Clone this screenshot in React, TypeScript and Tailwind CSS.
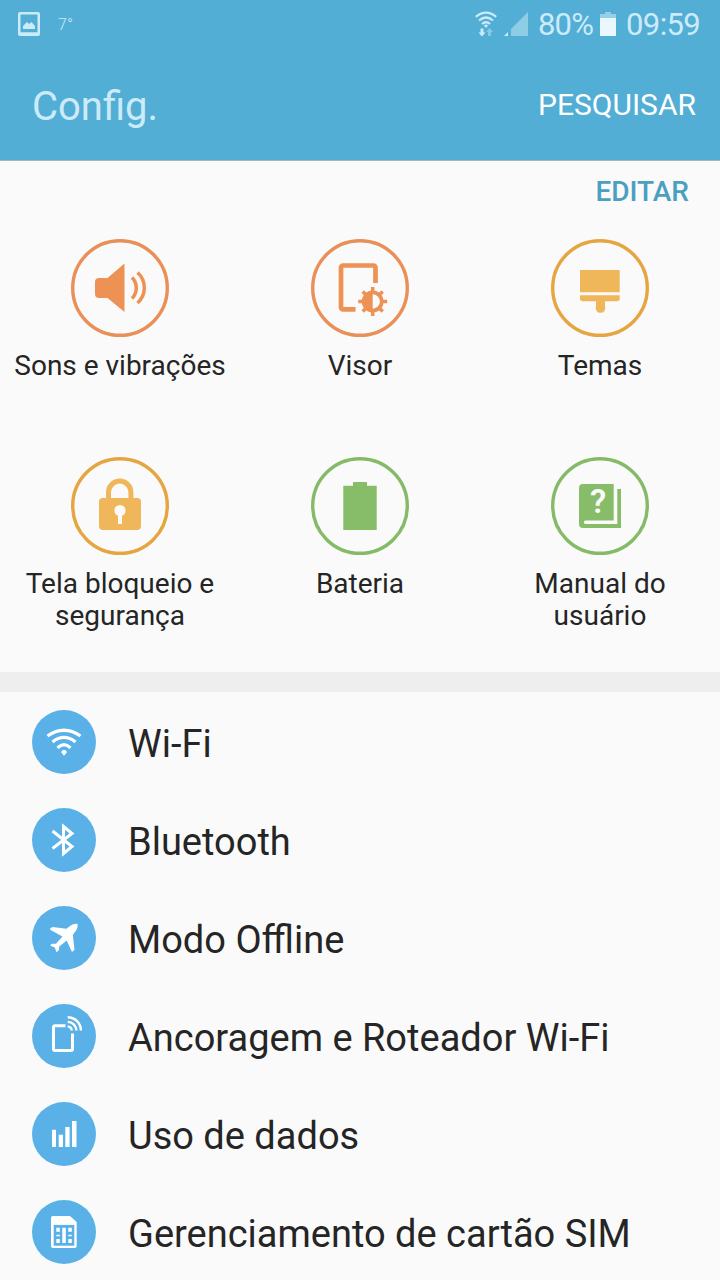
import type { ReactNode } from 'react';

const shortcuts: { label: string; color: string; icon: ReactNode }[] = [
  {
    label: 'Sons e vibrações',
    color: 'text-[#ed9155]',
    icon: (
      <>
        <path d="M39 48H47.5L64.5 33.5V82L47.5 68H39a4 4 0 0 1-4-4V52a4 4 0 0 1 4-4Z" fill="currentColor" />
        <path d="M72 47.5A15 15 0 0 1 72 68.5M77.5 42.5A20.500 20.500 0 0 1 77.5 73" fill="none" stroke="currentColor" strokeWidth="3.5" />
      </>
    ),
  },
  {
    label: 'Visor',
    color: 'text-[#ed9155]',
    icon: (
      <>
        <path d="M75.5 53V37.5a2 2 0 0 0-2-2H43a2 2 0 0 0-2 2V77.3a2 2 0 0 0 2 2H55.5" fill="none" stroke="currentColor" strokeWidth="4.7" />
        <circle cx="72.7" cy="71.5" r="10.9" fill="currentColor" />
        <path d="M72.7 57V86M58.2 71.5H87.2M62.7 61.5L82.7 81.5M82.7 61.5L62.7 81.5" stroke="currentColor" strokeWidth="3.5" />
        <path d="M72.7 64.3a7.2 7.2 0 0 1 0 14.4Z" fill="#fafafa" />
      </>
    ),
  },
  {
    label: 'Temas',
    color: 'text-[#f0b65a]',
    icon: (
      <>
        <path d="M40 40H79.7V62.3H40Z" fill="currentColor" />
        <path d="M40 65.3H79.7V68.5a2.8 2.8 0 0 1-2.8 2.8H65V76a4.900 4.900 0 1 1-9 0V71.3H42.8a2.8 2.8 0 0 1-2.8-2.8Z" fill="currentColor" />
      </>
    ),
  },
  {
    label: 'Tela bloqueio e segurança',
    color: 'text-[#f0b65a]',
    icon: (
      <>
        <path d="M48.5 51V44.3a11.2 11.2 0 0 1 22.4 0V51" fill="none" stroke="currentColor" strokeWidth="5" />
        <rect x="39" y="50" width="42" height="32" rx="4" fill="currentColor" />
        <circle cx="60" cy="62.5" r="5.6" fill="#fafafa" />
        <path d="M58 64H62V76H58Z" fill="#fafafa" />
      </>
    ),
  },
  {
    label: 'Bateria',
    color: 'text-[#87bd68]',
    icon: <path d="M43.3 37.7H53V34H67V37.7H76.7V82H43.3Z" fill="currentColor" />,
  },
  {
    label: 'Manual do usuário',
    color: 'text-[#87bd68]',
    icon: (
      <>
        <path d="M43 36H73.7V72.5H45.5a1.700 1.700 0 0 0 0 3.4H77.3V41H81V80H43a4 4 0 0 1-4-4V40a4 4 0 0 1 4-4Z" fill="currentColor" />
        <text x="58.2" y="65" textAnchor="middle" className="font-['Roboto'] text-[33px] font-semibold" fill="#fafafa">
          ?
        </text>
      </>
    ),
  },
];

const rings = [
  'text-[#e99058]',
  'text-[#e99058]',
  'text-[#e5a540]',
  'text-[#e5a540]',
  'text-[#85ba67]',
  'text-[#85ba67]',
];

const items: { label: string; icon: ReactNode }[] = [
  {
    label: 'Wi-Fi',
    icon: (
      <>
        <path d="M15.5 26Q32 14.5 48.5 26M20.5 32Q32 22.8 43.5 32M25.5 37.8Q32 31.5 38.5 37.8" fill="none" stroke="#fff" strokeWidth="3.2" />
        <path d="M29.3 42.5Q29.3 40 32 40T34.8 42.5L32 45.7Z" fill="#fff" />
      </>
    ),
  },
  {
    label: 'Bluetooth',
    icon: <path d="M20.5 23L40 38.5L31.5 45.5V18.5L40 25.5L20.5 40.5" fill="none" stroke="#fff" strokeWidth="3" />,
  },
  {
    label: 'Modo Offline',
    icon: (
      <path
        d="M18 22.5L20.5 21L34.3 22.8L39.5 18.9Q42.5 17.6 45.6 17.8Q46.2 21.200 44.3 24.3L40.8 28.8L42.500 43.7L40 46L34.7 34.5L27.300 40.5L27 44L24.5 46.3L22.7 41.5L18 39.5L20 37.8L24 37.7L30.5 30.5L18.500 24Z"
        fill="#fff"
      />
    ),
  },
  {
    label: 'Ancoragem e Roteador Wi-Fi',
    icon: (
      <>
        <path d="M33.5 21.7H23a1.5 1.5 0 0 0-1.500 1.5V45a1.5 1.5 0 0 0 1.5 1.5H39a1.5 1.5 0 0 0 1.5-1.500V29.5" fill="none" stroke="#fff" strokeWidth="3" />
        <path d="M35.7 22.5A4 4 0 0 1 39.7 26.5M35.7 17.9A8.6 8.6 0 0 1 44.3 26.5M35.7 13.3A13.2 13.2 0 0 1 48.9 26.5" fill="none" stroke="#fff" strokeWidth="2.4" />
      </>
    ),
  },
  {
    label: 'Uso de dados',
    icon: <path d="M20 27.7h4v17.3h-4ZM26.7 32.7h4.3v12.3h-4.3ZM33.3 25h4.3v20h-4.3ZM40 19h4.5v26h-4.5Z" fill="#fff" />,
  },
  {
    label: 'Gerenciamento de cartão SIM',
    icon: (
      <>
        <path d="M21 16H38L44.7 22V46a2 2 0 0 1-2 2H21a2 2 0 0 1-2-2V18a2 2 0 0 1 2-2Z" fill="#fff" />
        <path d="M21.7 24.9H42.3V45.7H21.7Z" fill="#5ab1e8" />
        <path
          d="M24.3 27.7h3.5v4h-3.5ZM24.3 34.7h3.5v1.5h-3.5ZM24.3 39h3.5v4h-3.5ZM30.3 27.7h3.5v15.3h-3.5ZM36.3 27.7h3.5v4h-3.5ZM36.3 34.7h3.5v1.5h-3.5ZM36.3 39h3.5v4h-3.5Z"
          fill="#fff"
        />
      </>
    ),
  },
];

function StatusBar() {
  return (
    <div className="flex h-12 items-center justify-between pl-[18px] pr-[19px] text-[#ccebf9]">
      <div className="flex items-center">
        <svg width="22" height="24" viewBox="0 0 22 24">
          <path d="M2 0H20a2 2 0 0 1 2 2V22a2 2 0 0 1-2 2H2a2 2 0 0 1-2-2V2a2 2 0 0 1 2-2ZM2.5 2.5V20.3H19.5V2.5Z" fill="currentColor" fillRule="evenodd" />
          <path d="M5 17V14L9 10L11 12L13.5 10L17 14V17Z" fill="currentColor" />
        </svg>
        <span className="ml-[18px] pt-px text-base font-light">7°</span>
      </div>
      <div className="flex items-center">
        <svg width="22" height="26" viewBox="0 0 22 26">
          <path d="M.8 5.8Q11 -2.5 21.2 5.8M4 9.5Q11 3.5 18 9.5M7 13Q11 9.5 15 13" fill="none" stroke="currentColor" strokeWidth="2.2" />
          <path d="M9 14.5Q11 12.5 13 14.5L11 17Z" fill="currentColor" />
          <path d="M5.5 17.5h3v4h2L7 25.5L3.5 21.5h2Z" fill="currentColor" />
          <path d="M13 25v-4h-2L14.5 17L18 21h-2v4Z" fill="currentColor" opacity=".45" />
        </svg>
        <svg className="ml-[7px]" width="24" height="24" viewBox="0 0 24 24">
          <path d="M24 0V24H7V17Z" fill="currentColor" opacity=".5" />
          <path d="M0 24L4 20V24Z" fill="currentColor" />
        </svg>
        <span className="ml-[10px] w-[56px] whitespace-nowrap pt-0.5 text-[31px] leading-[46px] tracking-[-0.8px]">80%</span>
        <svg className="ml-[6px]" width="16" height="24" viewBox="0 0 16 24">
          <path d="M0 2H5V0H11V2H16V7H0Z" fill="currentColor" opacity=".55" />
          <path d="M0 6H16V24H0Z" fill="#eaf7fd" />
        </svg>
        <span className="ml-[10px] w-[75px] whitespace-nowrap pt-0.5 text-[31px] leading-[46px] tracking-[-0.6px]">09:59</span>
      </div>
    </div>
  );
}

export default function App() {
  return (
    <div className="h-[1280px] w-[720px] overflow-hidden bg-[#fafafa] font-['Roboto',sans-serif] text-[#252525]">
      <header className="h-[161px] border-b border-[#a3b4bb] bg-[#52aed5]">
        <StatusBar />
        <div className="flex h-[112px] items-center justify-between pl-8 pr-6">
          <h1 className="pt-1.5 text-[40px] text-[#ccebf9]">Config.</h1>
          <button className="pt-px text-[30px] text-white">PESQUISAR</button>
        </div>
      </header>

      {/* Quick settings */}
      <section className="h-[511px]">
        <div className="flex h-[78px] justify-end pr-[31px] pt-[10px]">
          <button className="h-10 text-[28px] font-medium text-[#4b9fc0]">EDITAR</button>
        </div>
        <div className="grid grid-cols-3">
          {shortcuts.map((s, i) => (
            <div key={s.label} className="flex h-[218px] flex-col items-center">
              <svg className={s.color} width="98" height="98" viewBox="11 9 98 98">
                <circle className={rings[i]} cx="60" cy="58" r="47.3" fill="none" stroke="currentColor" strokeWidth="3.4" />
                {s.icon}
              </svg>
              <span className="mt-[13px] w-[220px] text-center text-[28px] leading-8">{s.label}</span>
            </div>
          ))}
        </div>
      </section>

      <div className="h-5 bg-[#eeeeee]" />

      {/* Settings list */}
      <ul className="pt-px">
        {items.map((item) => (
          <li key={item.label} className="flex h-[98px] items-center pl-8">
            <svg width="64" height="64" viewBox="0 0 64 64">
              <circle cx="32" cy="32" r="32" fill="#5ab1e8" />
              {item.icon}
            </svg>
            <span className="ml-8 whitespace-nowrap pt-1 text-[38px]">{item.label}</span>
          </li>
        ))}
      </ul>
    </div>
  );
}
